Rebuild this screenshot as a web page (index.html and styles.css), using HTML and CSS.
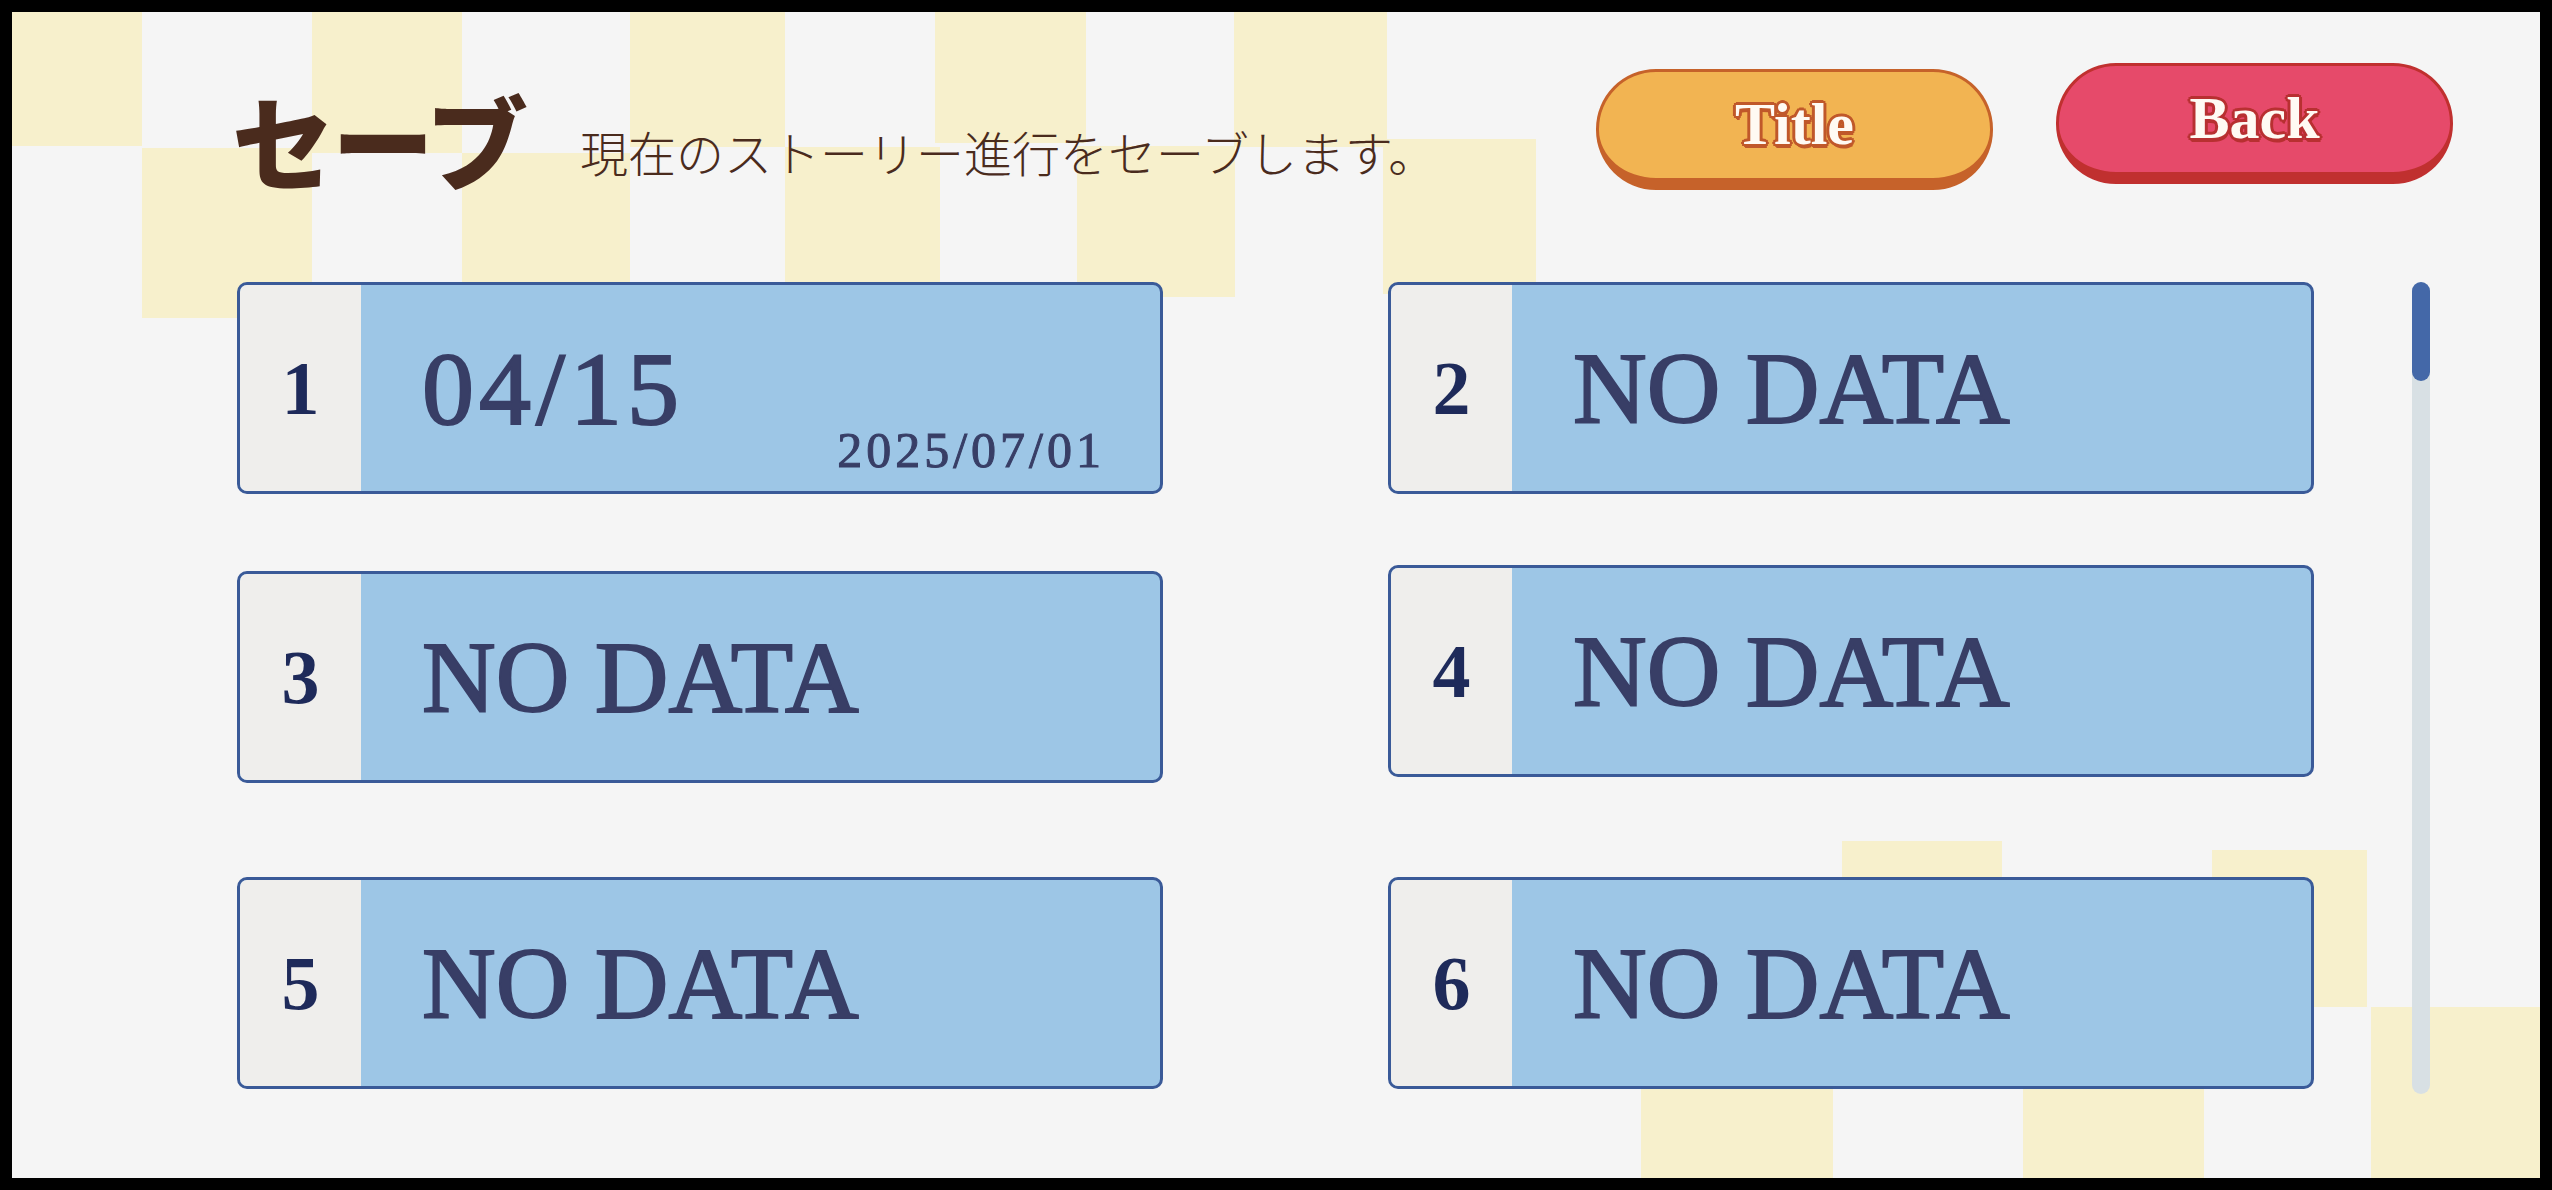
FILE: index.html
```html
<!DOCTYPE html>
<html lang="ja">
<head>
	<meta charset="UTF-8">
	<title>セーブ</title>
	<link rel="stylesheet" href="styles.css">
</head>
<body>
	<div class="screen">
		<!-- 背景の市松模様 -->
		<div class="bg">
			<span class="sq a1"></span>
			<span class="sq a2"></span>
			<span class="sq a3"></span>
			<span class="sq a4"></span>
			<span class="sq a5"></span>
			<span class="sq b1"></span>
			<span class="sq b2"></span>
			<span class="sq b3"></span>
			<span class="sq b4"></span>
			<span class="sq b5"></span>
			<span class="sq c1"></span>
			<span class="sq c2"></span>
			<span class="sq c3"></span>
			<span class="sq d1"></span>
			<span class="sq d2"></span>
		</div>

		<header class="top">
			<h1 class="title">セーブ</h1>
			<p class="lead">現在のストーリー進行をセーブします。</p>
			<nav class="btns">
				<button class="btn btn-title">Title</button>
				<button class="btn btn-back">Back</button>
			</nav>
		</header>

		<main class="main">
			<div class="col col-left">
				<div class="slot">
					<div class="slot-no">1</div>
					<div class="slot-body">
						<span class="slot-text date-text">04/15</span>
						<span class="slot-date">2025/07/01</span>
					</div>
				</div>
				<div class="slot">
					<div class="slot-no">3</div>
					<div class="slot-body"><span class="slot-text">NO DATA</span></div>
				</div>
				<div class="slot">
					<div class="slot-no">5</div>
					<div class="slot-body"><span class="slot-text">NO DATA</span></div>
				</div>
			</div>
			<div class="col col-right">
				<div class="slot">
					<div class="slot-no">2</div>
					<div class="slot-body"><span class="slot-text">NO DATA</span></div>
				</div>
				<div class="slot">
					<div class="slot-no">4</div>
					<div class="slot-body"><span class="slot-text">NO DATA</span></div>
				</div>
				<div class="slot">
					<div class="slot-no">6</div>
					<div class="slot-body"><span class="slot-text">NO DATA</span></div>
				</div>
			</div>
			<div class="scroll"><div class="thumb"></div></div>
		</main>
	</div>
</body>
</html>
```

FILE: styles.css
```css
/*全体*/
html,body{
	margin: 0;
	padding: 0;
}
body{
	background: #000;
	padding: 12px 12px 0 12px;
}
.screen{
	position: relative;
	width: 2528px;
	height: 1166px;
	background: #f5f5f5;
	overflow: hidden;
	font-family: "Noto Sans CJK JP", sans-serif;
}

/*背景の四角*/
.bg{
	position: absolute;
	left: 0;
	top: 0;
	right: 0;
	bottom: 0;
}
.sq{
	position: absolute;
	background: #f7f0cc;
}
.a1{ left: 0;    top: 0; width: 130px; height: 134px; }
.a2{ left: 300px; top: 0; width: 150px; height: 141px; }
.a3{ left: 618px; top: 0; width: 155px; height: 135px; }
.a4{ left: 923px; top: 0; width: 151px; height: 131px; }
.a5{ left: 1222px; top: 0; width: 153px; height: 135px; }
.b1{ left: 130px; top: 136px; width: 170px; height: 170px; }
.b2{ left: 450px; top: 141px; width: 168px; height: 150px; }
.b3{ left: 773px; top: 135px; width: 155px; height: 150px; }
.b4{ left: 1065px; top: 134px; width: 158px; height: 151px; }
.b5{ left: 1371px; top: 127px; width: 153px; height: 155px; }
.c1{ left: 1830px; top: 829px; width: 160px; height: 170px; }
.c2{ left: 2200px; top: 838px; width: 155px; height: 157px; }
.c3{ left: 2359px; top: 995px; width: 169px; height: 171px; }
.d1{ left: 1629px; top: 1000px; width: 192px; bottom: 0; }
.d2{ left: 2011px; top: 1000px; width: 181px; bottom: 0; }

/*ヘッダー*/
.top{
	position: relative;
	display: flex;
	align-items: flex-start;
	height: 270px;
	padding-left: 220px;
}
.title{
	margin: 76px 0 0 0;
	font-size: 102px;
	line-height: 102px;
	font-weight: 900;
	color: #4a2b1d;
	letter-spacing: -2px;
}
.lead{
	margin: 115px 0 0 54px;
	font-size: 48px;
	line-height: 48px;
	font-weight: 300;
	color: #4a2b1d;
}
.btns{
	display: flex;
	align-items: flex-start;
	gap: 63px;
	margin-left: auto;
	margin-right: 87px;
}
.btn{
	display: flex;
	align-items: center;
	justify-content: center;
	box-sizing: border-box;
	width: 397px;
	height: 121px;
	padding: 0 0 2px 0;
	border-radius: 60px;
	border: 3px solid;
	border-bottom-width: 12px;
	font-family: "Liberation Serif", serif;
	font-weight: bold;
	font-size: 60px;
	color: #fffaf3;
	cursor: pointer;
}
.btn-title{
	margin-top: 57px;
	background: #f2b452;
	border-color: #c6622a;
	text-shadow: 3px 0 #c0582a, -3px 0 #c0582a, 0 3px #c0582a, 0 -3px #c0582a,
		2px 2px #c0582a, -2px 2px #c0582a, 2px -2px #c0582a, -2px -2px #c0582a, 1px 4px #c0582a;
}
.btn-back{
	margin-top: 51px;
	background: #e64a6a;
	border-color: #c0302f;
	text-shadow: 3px 0 #b83031, -3px 0 #b83031, 0 3px #b83031, 0 -3px #b83031,
		2px 2px #b83031, -2px 2px #b83031, 2px -2px #b83031, -2px -2px #b83031, 1px 4px #b83031;
}

/*スロット*/
.main{
	position: relative;
	display: flex;
	align-items: flex-start;
	padding-left: 225px;
}
.col{
	display: flex;
	flex-direction: column;
	width: 926px;
}
.col-right{
	margin-left: 225px;
}
.col-left .slot:nth-child(2){ margin-top: 77px; }
.col-left .slot:nth-child(3){ margin-top: 94px; }
.col-right .slot:nth-child(2){ margin-top: 71px; }
.col-right .slot:nth-child(3){ margin-top: 100px; }

.slot{
	display: flex;
	box-sizing: border-box;
	height: 212px;
	border: 3px solid #3a5a98;
	border-radius: 10px;
	background: #9dc6e6;
	overflow: hidden;
}
.slot-no{
	display: flex;
	align-items: center;
	justify-content: center;
	width: 121px;
	background: #efeeec;
	font-family: "Liberation Serif", serif;
	font-weight: bold;
	font-size: 76px;
	color: #1e2a5a;
}
.slot-body{
	position: relative;
	flex: 1;
	display: flex;
	align-items: center;
	padding-left: 61px;
}
.slot-text{
	font-family: "Liberation Serif", serif;
	font-size: 102px;
	letter-spacing: 0;
	color: #383e66;
	-webkit-text-stroke: 2px #383e66;
}
.date-text{
	font-size: 104px;
	letter-spacing: 5px;
}
.slot-date{
	position: absolute;
	right: 55px;
	bottom: 12px;
	font-family: "Liberation Serif", serif;
	font-size: 50px;
	letter-spacing: 4px;
	color: #383e66;
	-webkit-text-stroke: 1px #383e66;
}

/*スクロールバー*/
.scroll{
	width: 18px;
	height: 812px;
	margin-left: 98px;
	border-radius: 9px;
	background: #d8e0e4;
}
.thumb{
	height: 99px;
	border-radius: 9px;
	background: #4468a8;
}
```
